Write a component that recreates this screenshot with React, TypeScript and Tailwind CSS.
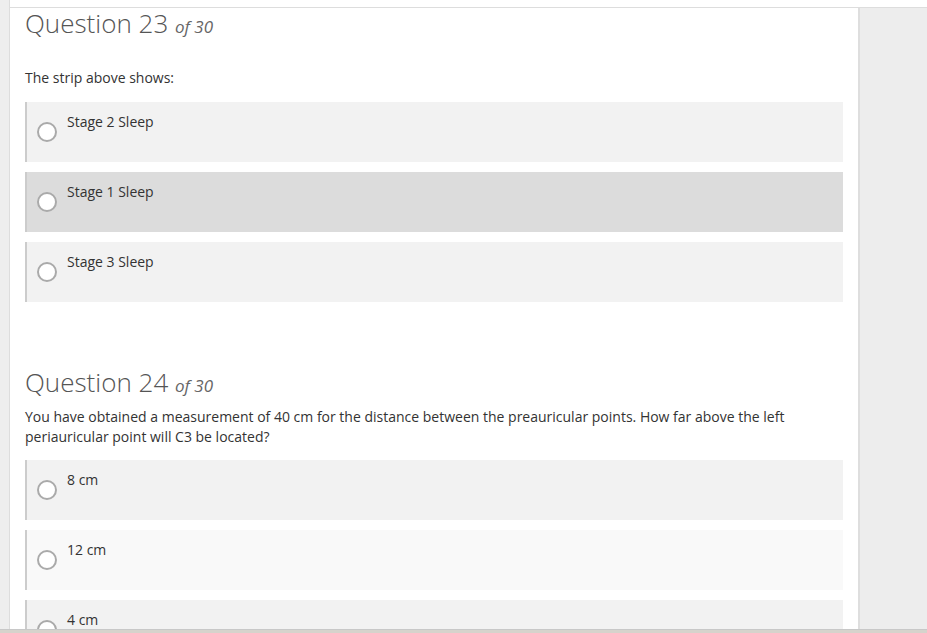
import React from "react";

type Opt = { label: string; bg: string };

function Option({ label, bg, mt }: { label: string; bg: string; mt: string }) {
  return (
    <div className={`${bg} ${mt} flex h-[60px] shrink-0 border-l-2 border-[#cccccc] pl-[10px]`}>
      <div className="mt-[20px] h-[20px] w-[20px] shrink-0 rounded-full border-2 border-[#aaaaaa] bg-white" />
      <div className="ml-[10px] pt-[10px] text-[14px] leading-[20px] text-[#333333]">{label}</div>
    </div>
  );
}

function Title({ n }: { n: number }) {
  return (
    <div className="h-[30px] whitespace-nowrap text-[26px] font-light leading-[30px] text-[#555555]">
      Question {n}{" "}
      <span className="text-[17px] font-normal italic text-[#666666]">of 30</span>
    </div>
  );
}

export default function App() {
  const q23: Opt[] = [
    { label: "Stage 2 Sleep", bg: "bg-[#f2f2f2]" },
    { label: "Stage 1 Sleep", bg: "bg-[#dcdcdc]" },
    { label: "Stage 3 Sleep", bg: "bg-[#f2f2f2]" },
  ];
  const q24: Opt[] = [
    { label: "8 cm", bg: "bg-[#f2f2f2]" },
    { label: "12 cm", bg: "bg-[#f9f9f9]" },
    { label: "4 cm", bg: "bg-[#f2f2f2]" },
  ];
  return (
    <div
      className="flex h-[633px] w-[927px] flex-col overflow-hidden bg-white"
      style={{ fontFamily: '"Open Sans", "Noto Sans", sans-serif' }}
    >
      <div className="flex h-[629px] shrink-0">
        <div className="w-[10px] shrink-0 border-r border-[#dddddd] bg-[#eeeeee]" />
        <div className="flex min-w-0 flex-1 flex-col">
          <div className="h-[8px] shrink-0 border-b border-[#dddddd] bg-white" />
          <div className="flex min-h-0 flex-1">
            <div className="flex min-w-0 flex-1 flex-col overflow-hidden bg-white px-[15px]">
              <Title n={23} />
              <p className="mt-[30px] text-[14px] leading-[20px] text-[#333333]">The strip above shows:</p>
              <Option label={q23[0].label} bg={q23[0].bg} mt="mt-[14px]" />
              <Option label={q23[1].label} bg={q23[1].bg} mt="mt-[10px]" />
              <Option label={q23[2].label} bg={q23[2].bg} mt="mt-[10px]" />
              <div className="mt-[65px]">
                <Title n={24} />
              </div>
              <p className="mt-[10px] text-[14px] leading-[20px] text-[#333333]">
                You have obtained a measurement of 40 cm for the distance between the preauricular points. How far above the left periauricular point will C3 be located?
              </p>
              <Option label={q24[0].label} bg={q24[0].bg} mt="mt-[13px]" />
              <Option label={q24[1].label} bg={q24[1].bg} mt="mt-[10px]" />
              <Option label={q24[2].label} bg={q24[2].bg} mt="mt-[10px]" />
            </div>
            <div className="w-[69px] shrink-0 border-l-2 border-[#dedede] bg-[#ededed]" />
          </div>
        </div>
      </div>
      <div className="h-[4px] shrink-0 border-t border-[#c8c8c8] bg-[#d6d3cc]" />
    </div>
  );
}
